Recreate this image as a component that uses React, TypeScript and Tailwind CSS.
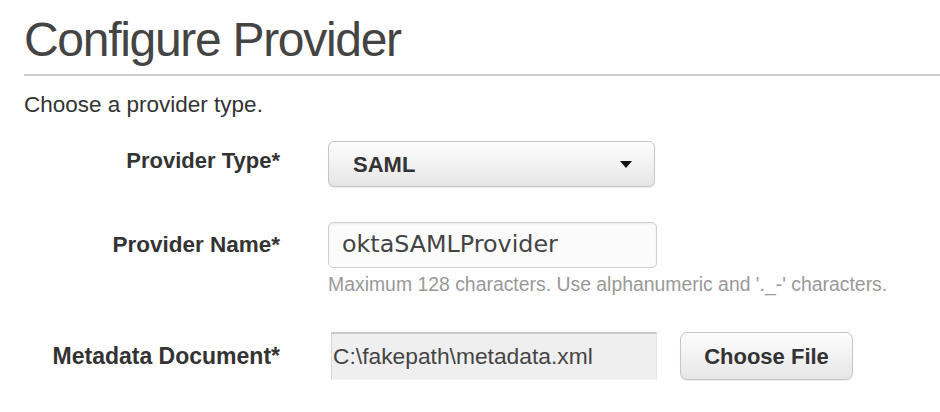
export default function App() {
  return (
    <div className="w-[940px] h-[412px] bg-white pl-6 font-['Liberation_Sans','Helvetica',Arial,sans-serif] text-[#333] overflow-hidden">
      {/* Header */}
      <h1 className="pt-3 pb-[6px] border-b-2 border-[#cccccc] text-[48px] leading-[56px] tracking-[-1.3px] text-[#444] font-normal">
        Configure Provider
      </h1>
      <p className="mt-[16px] text-[22.5px] leading-[26px] text-[#333]">Choose a provider type.</p>

      {/* Provider Type */}
      <div className="mt-[23px] flex items-start gap-12">
        <label className="w-[256px] pt-[7px] text-right text-[22px] leading-[26px] font-bold text-[#333]">
          Provider Type*
        </label>
        <div className="w-[327px] h-[46px] flex items-center justify-between rounded-[6px] border border-[#c6c6c6] bg-gradient-to-b from-[#fdfdfd] to-[#e6e6e6] pl-[24px] pr-[22px] shadow-[0_1px_1px_rgba(0,0,0,0.08)]">
          <span className="text-[22px] font-bold text-[#333]">SAML</span>
          <svg width="12" height="7" viewBox="0 0 12 7">
            <path d="M0 0 L12 0 L6 7 Z" fill="#111" />
          </svg>
        </div>
      </div>

      {/* Provider Name */}
      <div className="mt-[35px] flex items-start gap-12">
        <label className="w-[256px] pt-[10px] text-right text-[22.5px] leading-[26px] font-bold text-[#333]">
          Provider Name*
        </label>
        <div className="flex flex-col">
          <div className="w-[329px] h-[46px] flex items-center rounded-[5px] border border-[#cfcfcf] bg-[#fbfbfb] pl-[13px] shadow-[inset_0_1px_2px_rgba(0,0,0,0.06)]">
            <span className="font-['DejaVu_Sans',sans-serif] text-[23.8px] text-[#444]">oktaSAMLProvider</span>
          </div>
          <p className="mt-[5px] text-[19.4px] leading-[22px] text-[#999] whitespace-nowrap">
            Maximum 128 characters. Use alphanumeric and '._-' characters.
          </p>
        </div>
      </div>

      {/* Metadata Document */}
      <div className="mt-[37px] flex items-start gap-12">
        <label className="w-[256px] pt-[11px] text-right text-[23px] leading-[26px] font-bold text-[#333]">
          Metadata Document*
        </label>
        <div className="flex items-center gap-[23px]">
          <div className="ml-[3px] w-[326px] h-[48px] flex items-center bg-[#efefef] border-t-2 border-t-[#c9c9c9] border-l border-l-[#d6d6d6] border-r border-r-[#e6e6e6] border-b border-b-[#f4f4f4] pl-[1px]">
            <span className="text-[22.8px] text-[#444]">C:\fakepath\metadata.xml</span>
          </div>
          <button className="w-[173px] h-[48px] rounded-[7px] border border-[#c6c6c6] bg-gradient-to-b from-[#fdfdfd] to-[#e6e6e6] text-[22px] font-bold text-[#333] shadow-[0_1px_1px_rgba(0,0,0,0.08)]">
            Choose File
          </button>
        </div>
      </div>
    </div>
  );
}
